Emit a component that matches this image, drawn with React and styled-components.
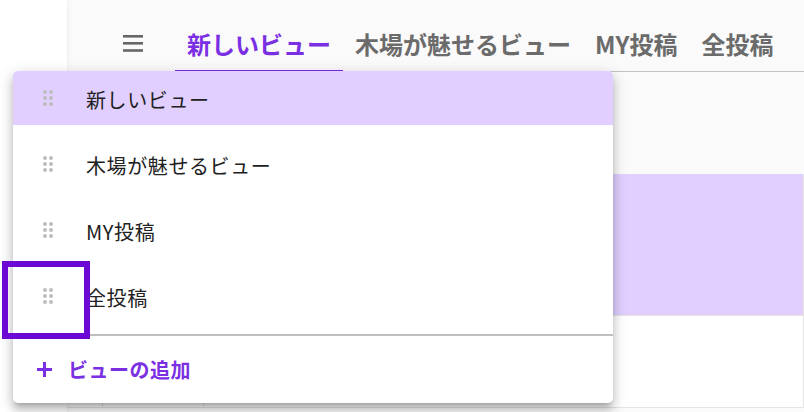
import React from "react";
import styled, { createGlobalStyle } from "styled-components";

const GlobalStyle = createGlobalStyle`
  html, body {
    margin: 0;
    padding: 0;
    background: #ffffff;
  }
  body {
    font-family: "Noto Sans CJK JP", "Noto Sans", sans-serif;
  }
  * {
    box-sizing: border-box;
  }
`;

const PURPLE = "#7b2fe3";
const LAVENDER = "#e1d0ff";

const tabs = ["新しいビュー", "木場が魅せるビュー", "MY投稿", "全投稿"];
const views = ["木場が魅せるビュー", "MY投稿", "全投稿"];

const HamburgerIcon = () => (
  <svg width="20" height="18" viewBox="0 0 20 18">
    <rect x="0" y="1" width="20" height="2.6" fill="#666" />
    <rect x="0" y="8" width="20" height="2.6" fill="#666" />
    <rect x="0" y="15.2" width="20" height="2.6" fill="#666" />
  </svg>
);

const PlusIcon = () => (
  <svg width="15" height="15" viewBox="0 0 15 15">
    <rect x="6" y="0" width="3" height="15" fill={PURPLE} />
    <rect x="0" y="6" width="15" height="3" fill={PURPLE} />
  </svg>
);

const DragHandle = () => (
  <Handle>
    {Array.from({ length: 6 }).map((_, i) => (
      <Dot key={i} />
    ))}
  </Handle>
);

const App = () => {
  return (
    <>
      <GlobalStyle />
      <Page>
        <Sidebar />
        <Main>
          <Header>
            <MenuButton>
              <HamburgerIcon />
            </MenuButton>
            {tabs.map((t, i) => (
              <Tab key={t} $active={i === 0}>
                {t}
              </Tab>
            ))}
          </Header>
          <Content>
            <TableRow $selected $height={142}>
              <Cell $w={36} />
              <Cell $w={101} />
              <Cell />
            </TableRow>
            <TableRow $height={92}>
              <Cell $w={36} />
              <Cell $w={101} />
              <Cell />
            </TableRow>
          </Content>
        </Main>

        <Popover>
          <MenuItem $selected $height={54}>
            <DragHandle />
            <ItemLabel>新しいビュー</ItemLabel>
          </MenuItem>
          <ItemList>
            {views.map((v) => (
              <MenuItem key={v} $height={66}>
                <DragHandle />
                <ItemLabel>{v}</ItemLabel>
              </MenuItem>
            ))}
          </ItemList>
          <Divider />
          <AddButton>
            <PlusIcon />
            <span>ビューの追加</span>
          </AddButton>
        </Popover>

        <FocusRing />
      </Page>
    </>
  );
};

export default App;

const Page = styled.div`
  position: relative;
  display: flex;
  width: 804px;
  height: 412px;
  overflow: hidden;
  background: #ffffff;
`;

const Sidebar = styled.div`
  width: 67px;
  flex-shrink: 0;
  background: #ffffff;
  box-shadow: 1px 0 5px rgba(0, 0, 0, 0.05);
  z-index: 1;
`;

const Main = styled.div`
  flex: 1;
  display: flex;
  flex-direction: column;
  background: #fafafa;
`;

const Header = styled.div`
  height: 72px;
  display: flex;
  align-items: flex-end;
  padding-left: 56px;
  border-bottom: 1px solid #c4c4c4;
`;

const MenuButton = styled.div`
  height: 54px;
  display: flex;
  align-items: center;
  margin-right: 32px;
  padding-bottom: 3px;
`;

const Tab = styled.div`
  height: 55px;
  margin-bottom: -1px;
  padding: 0 12px;
  display: flex;
  align-items: center;
  font-size: 24px;
  font-weight: 700;
  white-space: nowrap;
  color: ${(p) => (p.$active ? PURPLE : "#6b6b6b")};
  border-bottom: 2px solid ${(p) => (p.$active ? PURPLE : "transparent")};
`;

const Content = styled.div`
  flex: 1;
  padding-top: 102px;
`;

const TableRow = styled.div`
  display: flex;
  height: ${(p) => p.$height}px;
  background: ${(p) => (p.$selected ? LAVENDER : "#ffffff")};
  border-bottom: 1px solid #e4e4e4;
`;

const Cell = styled.div`
  ${(p) => (p.$w ? `width: ${p.$w}px;` : "flex: 1;")}
  border-right: 1px solid #e4e4e4;
`;

const Popover = styled.div`
  position: absolute;
  left: 13px;
  top: 71px;
  width: 600px;
  height: 332px;
  background: #ffffff;
  border-radius: 5px;
  overflow: hidden;
  display: flex;
  flex-direction: column;
  box-shadow: 0 5px 5px -3px rgba(0, 0, 0, 0.2),
    0 8px 10px 1px rgba(0, 0, 0, 0.14), 0 3px 14px 2px rgba(0, 0, 0, 0.12);
  z-index: 2;
`;

const ItemList = styled.div`
  padding: 6px 0 5px;
`;

const MenuItem = styled.div`
  height: ${(p) => p.$height}px;
  display: flex;
  align-items: center;
  padding-left: 30px;
  background: ${(p) => (p.$selected ? LAVENDER : "transparent")};
`;

const Handle = styled.div`
  display: grid;
  grid-template-columns: 4px 4px;
  grid-auto-rows: 4px;
  gap: 2px;
  margin-right: 33px;
`;

const Dot = styled.span`
  width: 4px;
  height: 4px;
  border-radius: 50%;
  background: #bdbdbd;
`;

const ItemLabel = styled.span`
  font-size: 20px;
  letter-spacing: 0.6px;
  color: #212121;
  white-space: nowrap;
  padding-top: 2px;
`;

const Divider = styled.div`
  height: 2px;
  background: #bfbfbf;
`;

const AddButton = styled.div`
  flex: 1;
  display: flex;
  align-items: center;
  gap: 16px;
  padding-left: 24px;
  font-size: 20px;
  font-weight: 700;
  letter-spacing: 0.5px;
  color: ${PURPLE};
`;

const FocusRing = styled.div`
  position: absolute;
  left: 2px;
  top: 261px;
  width: 88px;
  height: 78px;
  border: 6px solid #6b08d3;
  z-index: 3;
`;
